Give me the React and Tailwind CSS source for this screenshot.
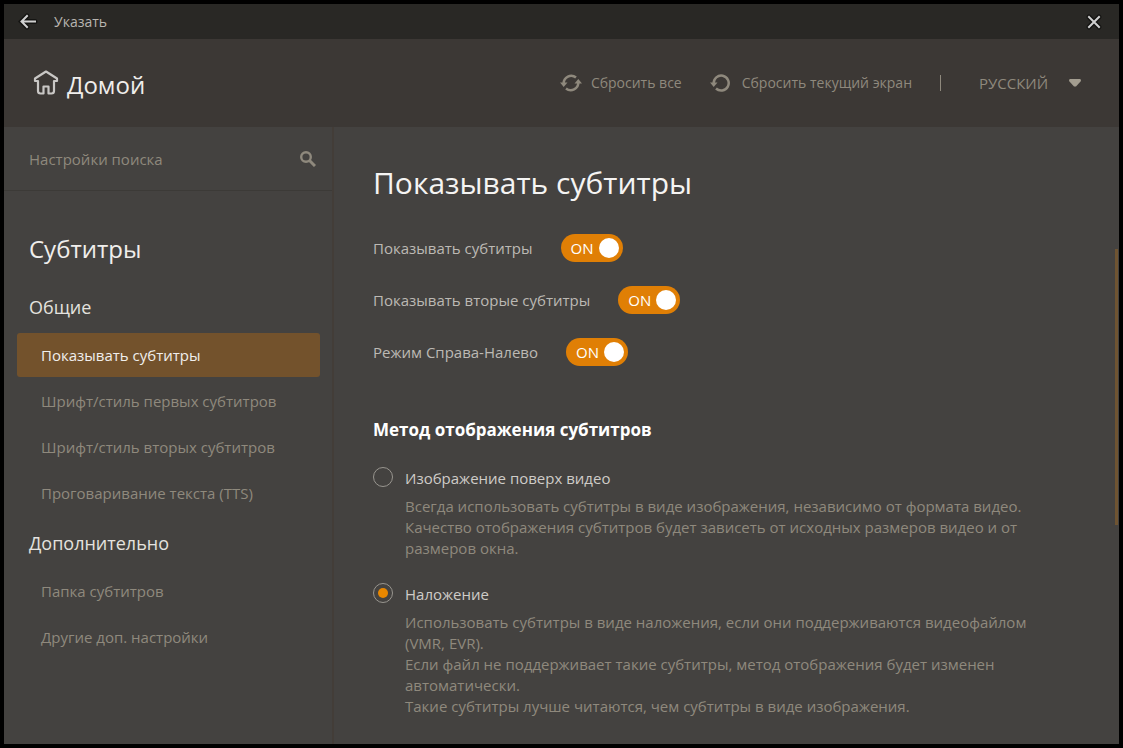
import { useState } from 'react';

const navSections = [
  {
    title: 'Общие',
    items: [
      'Показывать субтитры',
      'Шрифт/стиль первых субтитров',
      'Шрифт/стиль вторых субтитров',
      'Проговаривание текста (TTS)'
    ]
  },
  {
    title: 'Дополнительно',
    items: ['Папка субтитров', 'Другие доп. настройки']
  }
];

const toggles = [
  { id: 'show', label: 'Показывать субтитры' },
  { id: 'second', label: 'Показывать вторые субтитры' },
  { id: 'rtl', label: 'Режим Справа-Налево' }
];

const methods = [
  {
    id: 'image',
    label: 'Изображение поверх видео',
    lines: [
      'Всегда использовать субтитры в виде изображения, независимо от формата видео.',
      'Качество отображения субтитров будет зависеть от исходных размеров видео и от',
      'размеров окна.'
    ]
  },
  {
    id: 'overlay',
    label: 'Наложение',
    lines: [
      'Использовать субтитры в виде наложения, если они поддерживаются видеофайлом',
      '(VMR, EVR).',
      'Если файл не поддерживает такие субтитры, метод отображения будет изменен',
      'автоматически.',
      'Такие субтитры лучше читаются, чем субтитры в виде изображения.'
    ]
  }
];

const BackIcon = () => (
  <svg width="22" height="18" viewBox="0 0 22 18" fill="none" aria-hidden="true">
    <path d="M9 3L3.500 8.500 9 14M4 8.500H17" stroke="#000" strokeOpacity="0.5" strokeWidth="5" strokeLinecap="round" />
    <path d="M9 3L3.500 8.500 9 14M4 8.500H17" stroke="#d0d0d0" strokeWidth="2" strokeLinecap="square" />
  </svg>
);

const CloseIcon = () => (
  <svg width="18" height="18" viewBox="0 0 18 18" fill="none" aria-hidden="true">
    <path d="M4 4l10 10M14 4L4 14" stroke="#000" strokeOpacity="0.5" strokeWidth="5" strokeLinecap="round" />
    <path d="M4 4l10 10M14 4L4 14" stroke="#d0d0d0" strokeWidth="2" strokeLinecap="square" />
  </svg>
);

const HomeIcon = () => (
  <svg width="26" height="26" viewBox="0 0 26 26" fill="none" stroke="#c9c7c5" strokeWidth="2.200" strokeLinejoin="round" aria-hidden="true">
    <path d="M13 2.500L2 9.500v2.500h3v10q0 2.500 2.500 2.500h3v-7h5v7h3q2.500 0 2.500-2.500v-10h3v-2.500z" />
  </svg>
);

const ResetAllIcon = () => (
  <svg width="22" height="18" viewBox="0 0 22 18" fill="none" aria-hidden="true">
    <path d="M3.700 9.500A7.500 7.500 0 0 1 16 3.500M18.300 8.500A7.500 7.500 0 0 1 6 14.500" stroke="#8f897d" strokeWidth="2.500" />
    <path d="M0 8.500h7.500L3.700 13zM14.500 9.500L18.300 5 22 9.500z" fill="#8f897d" />
  </svg>
);

const ResetScreenIcon = () => (
  <svg width="20" height="18" viewBox="0 0 20 18" fill="none" aria-hidden="true">
    <path d="M3.700 9.500A7.500 7.500 0 1 1 6 14.500" stroke="#8f897d" strokeWidth="2.500" />
    <path d="M0 8.500h7.500L3.700 13z" fill="#8f897d" />
  </svg>
);

const SearchIcon = () => (
  <svg width="16" height="16" viewBox="0 0 16 16" fill="none" stroke="#8f897d" aria-hidden="true">
    <circle cx="6" cy="6" r="4.800" strokeWidth="2.400" />
    <path d="M9.500 9.500L15 15" strokeWidth="3" />
  </svg>
);

const Toggle = ({ id, label, checked, onChange }) => (
  <div className="flex h-7 items-center gap-7">
    <label htmlFor={id} className="text-[15px] leading-5 text-[#bcb9b4]">
      {label}
    </label>
    <span className="relative flex h-7 w-[62px] items-center">
      <input
        id={id}
        type="checkbox"
        role="switch"
        checked={checked}
        onChange={onChange}
        className="h-7 w-full cursor-pointer appearance-none rounded-full bg-[#5c5a57] checked:bg-[#e07f05]"
      />
      <span className={`pointer-events-none absolute text-[15px] leading-5 text-white ${checked ? 'left-[10px]' : 'right-2'}`}>
        {checked ? 'ON' : 'OFF'}
      </span>
      <span className={`pointer-events-none absolute size-5 rounded-full bg-white ${checked ? 'right-1' : 'left-1'}`} />
    </span>
  </div>
);

const Method = ({ method, checked, onChange }) => (
  <div className="flex gap-3">
    <input
      id={method.id}
      type="radio"
      name="method"
      checked={checked}
      onChange={onChange}
      className="size-5 shrink-0 appearance-none rounded-full border border-[#98958f] bg-clip-content p-1 checked:bg-[#e88700]"
    />
    <div>
      <label htmlFor={method.id} className="block text-[15px] leading-[22px] text-[#cfccc8]">
        {method.label}
      </label>
      <p className="mt-[7px] text-[15px] leading-[21px] text-[#8f897d]">
        {method.lines.map((line) => (
          <span key={line} className="block">{line}</span>
        ))}
      </p>
    </div>
  </div>
);

const App = () => {
  const [active, setActive] = useState('Показывать субтитры');
  const [enabled, setEnabled] = useState({ show: true, second: true, rtl: true });
  const [method, setMethod] = useState('overlay');

  return (
    <div className="flex min-h-screen flex-col border-4 border-black bg-[#444240] font-['Open_Sans','Noto_Sans',sans-serif]">
      <div className="flex h-[35px] items-center justify-between bg-[#292825] pr-4 pl-[14px]">
        <div className="flex items-center gap-[14px]">
          <button type="button" aria-label="Назад">
            <BackIcon />
          </button>
          <span className="text-sm leading-5 text-[#b8b5b0]">Указать</span>
        </div>
        <button type="button" aria-label="Закрыть">
          <CloseIcon />
        </button>
      </div>

      <header className="flex h-[88px] items-center justify-between bg-[#3c3835] pr-[38px] pl-[29px]">
        <a href="#" className="flex items-start gap-2 pt-1 text-2xl text-[#f0eeec]">
          <HomeIcon />
          Домой
        </a>
        <div className="flex items-center text-sm leading-5 text-[#8f897d]">
          <button type="button" className="flex items-center gap-[9px]">
            <ResetAllIcon />
            Сбросить все
          </button>
          <button type="button" className="ml-7 flex items-center gap-3">
            <ResetScreenIcon />
            Сбросить текущий экран
          </button>
          <span className="ml-7 h-4 w-px bg-[#8f897d]" />
          <div className="relative ml-[38px] flex items-center">
            <select aria-label="Язык" defaultValue="ru" className="w-[102px] appearance-none bg-transparent text-[15px]">
              <option value="ru">РУССКИЙ</option>
            </select>
            <svg width="12" height="8" viewBox="0 0 12 8" className="pointer-events-none absolute right-0" aria-hidden="true">
              <path d="M1 0h10q1 0 1 2L7 7.500H5L0 2q0-2 1-2z" fill="#a39d90" />
            </svg>
          </div>
        </div>
      </header>

      <div className="flex flex-1">
        <aside className="w-[330px] shrink-0 border-r-2 border-[#433d38]">
          <div className="flex h-16 items-center border-b border-[#3c3a37] pr-4 pl-[25px]">
            <input
              type="text"
              aria-label="Настройки поиска"
              placeholder="Настройки поиска"
              className="min-w-0 flex-1 bg-transparent text-[15px] leading-5 text-[#cfccc8] outline-none placeholder:text-[#8f897d]"
            />
            <button type="button" aria-label="Найти">
              <SearchIcon />
            </button>
          </div>

          <nav className="pt-[42px] pr-3 pl-[13px]">
            <h2 className="mb-4 pl-3 text-2xl text-[#f0eeec]">Субтитры</h2>
            {navSections.map((section) => (
              <div key={section.title}>
                <h3 className="flex h-[52px] items-center pl-3 text-lg text-[#e4e2df]">{section.title}</h3>
                {section.items.map((item) => (
                  <a
                    key={item}
                    href="#"
                    onClick={() => setActive(item)}
                    className={`mb-[2px] flex h-11 items-center rounded-[3px] pl-6 text-[15px] ${
                      item === active ? 'bg-[#73522c] text-[#f0eeec]' : 'text-[#8f897d]'
                    }`}
                  >
                    {item}
                  </a>
                ))}
              </div>
            ))}
          </nav>
        </aside>

        <main className="relative min-w-0 flex-1 pt-9 pr-6 pl-[39px]">
          <h1 className="text-[30px] leading-10 text-[#f5f4f3]">Показывать субтитры</h1>

          <div className="mt-[31px] flex flex-col gap-6">
            {toggles.map((t) => (
              <Toggle
                key={t.id}
                id={t.id}
                label={t.label}
                checked={enabled[t.id]}
                onChange={() => setEnabled({ ...enabled, [t.id]: !enabled[t.id] })}
              />
            ))}
          </div>

          <h2 className="mt-[50px] text-[17px] leading-7 font-bold text-white">Метод отображения субтитров</h2>
          <div className="mt-[23px] flex flex-col gap-6">
            {methods.map((m) => (
              <Method key={m.id} method={m} checked={method === m.id} onChange={() => setMethod(m.id)} />
            ))}
          </div>

          {/* Ползунок прокрутки */}
          <div className="absolute top-[122px] right-px h-[276px] w-[3px] bg-[#6f5432]" />
        </main>
      </div>
    </div>
  );
};

export default App;
